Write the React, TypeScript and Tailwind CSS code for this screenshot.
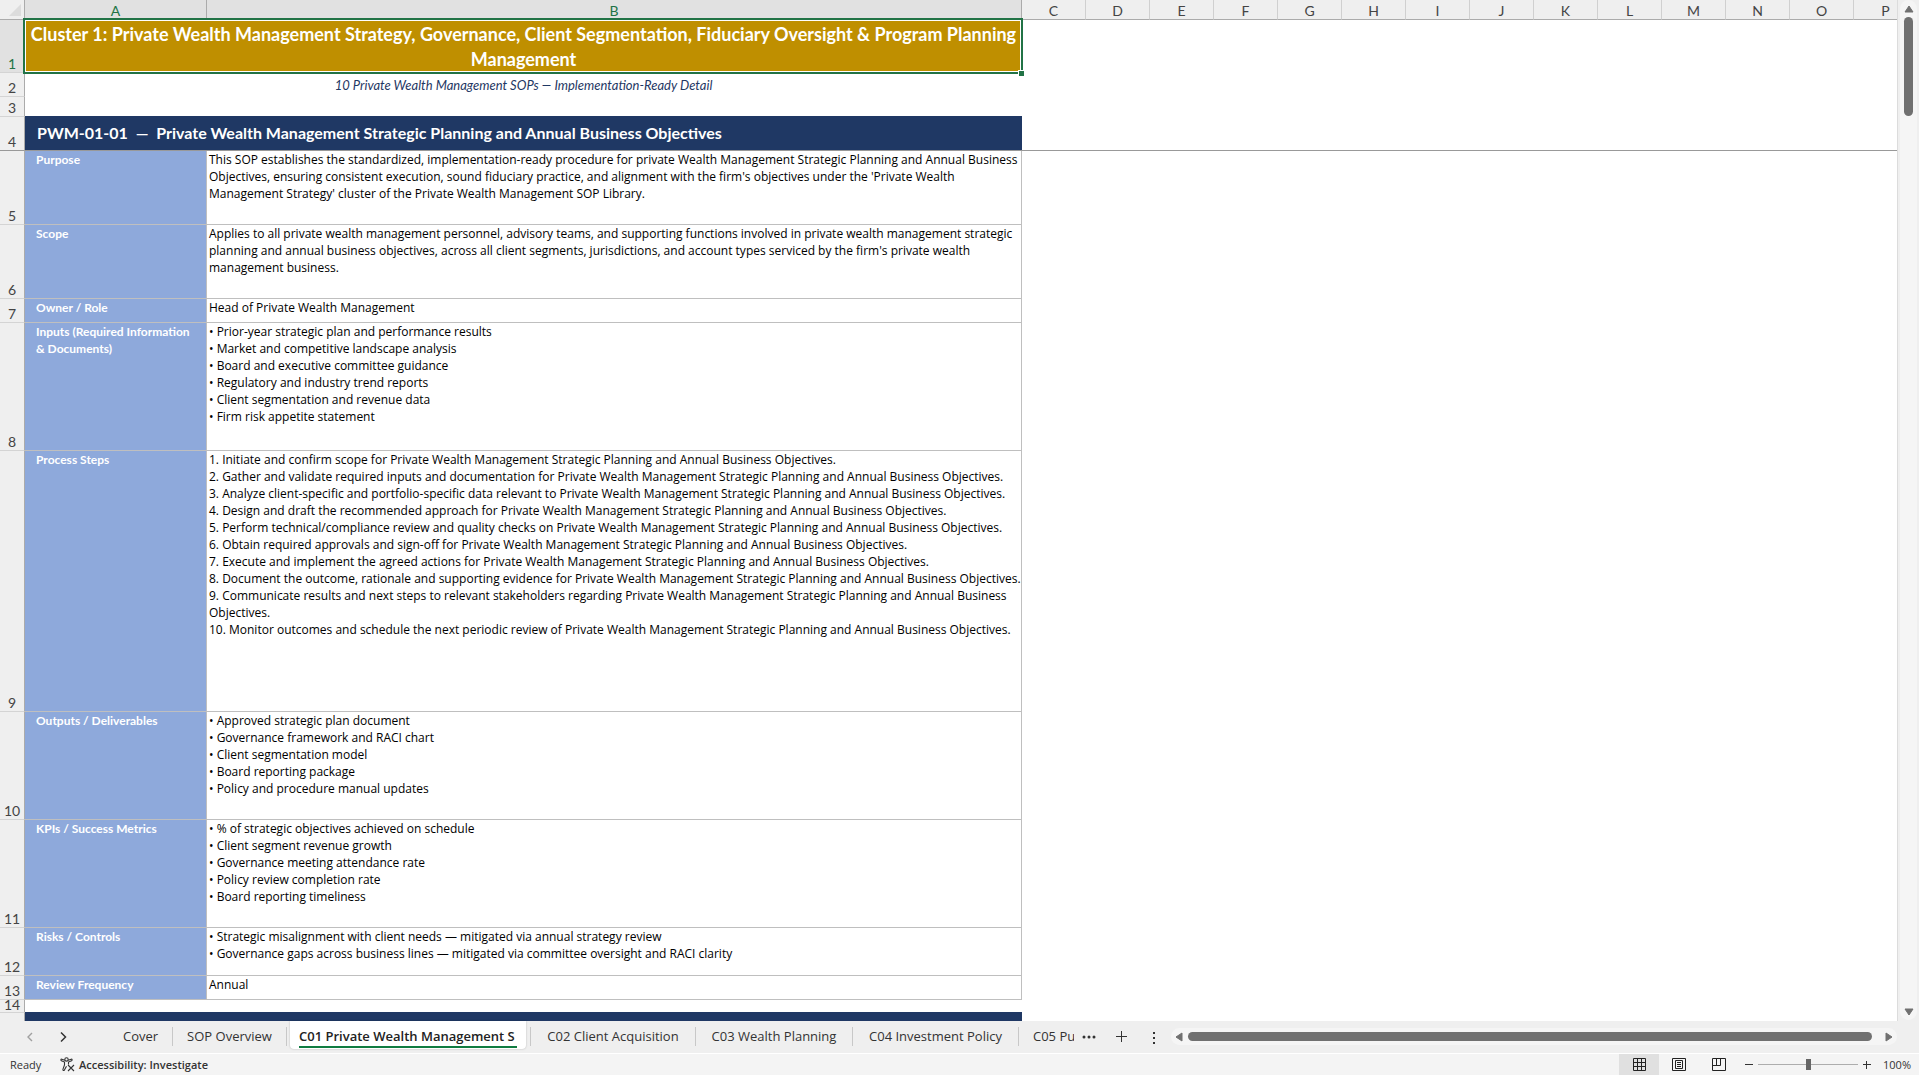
import { ReactNode } from 'react';
import clsx from 'clsx';

const OBJ = 'Private Wealth Management Strategic Planning and Annual Business';

const restColumns = ['C', 'D', 'E', 'F', 'G', 'H', 'I', 'J', 'K', 'L', 'M', 'N', 'O', 'P'];

type SopRow = { n: number; height: string; label: string[]; lines: string[] };

const sopRows: SopRow[] = [
  {
    n: 5,
    height: 'h-[74px]',
    label: ['Purpose'],
    lines: [
      'This SOP establishes the standardized, implementation-ready procedure for private Wealth Management Strategic Planning and Annual Business',
      "Objectives, ensuring consistent execution, sound fiduciary practice, and alignment with the firm's objectives under the 'Private Wealth",
      "Management Strategy' cluster of the Private Wealth Management SOP Library.",
    ],
  },
  {
    n: 6,
    height: 'h-[74px]',
    label: ['Scope'],
    lines: [
      'Applies to all private wealth management personnel, advisory teams, and supporting functions involved in private wealth management strategic',
      "planning and annual business objectives, across all client segments, jurisdictions, and account types serviced by the firm's private wealth",
      'management business.',
    ],
  },
  { n: 7, height: 'h-[24px]', label: ['Owner / Role'], lines: ['Head of Private Wealth Management'] },
  {
    n: 8,
    height: 'h-[128px]',
    label: ['Inputs (Required Information', '& Documents)'],
    lines: [
      '• Prior-year strategic plan and performance results',
      '• Market and competitive landscape analysis',
      '• Board and executive committee guidance',
      '• Regulatory and industry trend reports',
      '• Client segmentation and revenue data',
      '• Firm risk appetite statement',
    ],
  },
  {
    n: 9,
    height: 'h-[261px]',
    label: ['Process Steps'],
    lines: [
      `1. Initiate and confirm scope for ${OBJ} Objectives.`,
      `2. Gather and validate required inputs and documentation for ${OBJ} Objectives.`,
      `3. Analyze client-specific and portfolio-specific data relevant to ${OBJ} Objectives.`,
      `4. Design and draft the recommended approach for ${OBJ} Objectives.`,
      `5. Perform technical/compliance review and quality checks on ${OBJ} Objectives.`,
      `6. Obtain required approvals and sign-off for ${OBJ} Objectives.`,
      `7. Execute and implement the agreed actions for ${OBJ} Objectives.`,
      `8. Document the outcome, rationale and supporting evidence for ${OBJ} Objectives.`,
      `9. Communicate results and next steps to relevant stakeholders regarding ${OBJ}`,
      'Objectives.',
      `10. Monitor outcomes and schedule the next periodic review of ${OBJ} Objectives.`,
    ],
  },
  {
    n: 10,
    height: 'h-[108px]',
    label: ['Outputs / Deliverables'],
    lines: [
      '• Approved strategic plan document',
      '• Governance framework and RACI chart',
      '• Client segmentation model',
      '• Board reporting package',
      '• Policy and procedure manual updates',
    ],
  },
  {
    n: 11,
    height: 'h-[108px]',
    label: ['KPIs / Success Metrics'],
    lines: [
      '• % of strategic objectives achieved on schedule',
      '• Client segment revenue growth',
      '• Governance meeting attendance rate',
      '• Policy review completion rate',
      '• Board reporting timeliness',
    ],
  },
  {
    n: 12,
    height: 'h-[48px]',
    label: ['Risks / Controls'],
    lines: [
      '• Strategic misalignment with client needs — mitigated via annual strategy review',
      '• Governance gaps across business lines — mitigated via committee oversight and RACI clarity',
    ],
  },
  { n: 13, height: 'h-[24px]', label: ['Review Frequency'], lines: ['Annual'] },
];

function RowHead({ n, height, active, frozen }: { n?: number; height: string; active?: boolean; frozen?: boolean }) {
  return (
    <th
      scope="row"
      className={clsx(
        'border-r border-b border-r-[#ababab] p-0 text-center align-bottom text-[14px] leading-[17px] font-normal',
        height,
        active ? 'bg-[#e1e1e1] text-[#217346]' : 'bg-[#efefef] text-[#444444]',
        frozen ? 'border-b-[#999999]' : 'border-b-[#d4d4d4]',
      )}
    >
      {n}
    </th>
  );
}

function ColumnHead({ children, active }: { children: ReactNode; active?: boolean }) {
  return (
    <th
      scope="col"
      className={clsx(
        'h-[20px] border-r border-b border-b-[#ababab] p-0 text-center align-bottom text-[14px] leading-[17px] font-normal',
        active ? 'border-r-[#ababab] bg-[#e1e1e1] text-[#217346]' : 'border-r-[#d0d0d0] bg-[#efefef] text-[#444444]',
      )}
    >
      {children}
    </th>
  );
}

function Sheet() {
  return (
    <div className="min-w-0 flex-1 overflow-hidden border-r border-[#dcdcdc] bg-white">
      <table className="w-[1918px] table-fixed border-separate border-spacing-0 font-[Lato,'Liberation_Sans',sans-serif]">
        <colgroup>
          <col className="w-[25px]" />
          <col className="w-[182px]" />
          <col className="w-[815px]" />
          {restColumns.map((c) => (
            <col key={c} className="w-[64px]" />
          ))}
        </colgroup>
        <thead>
          <tr>
            <td className="h-[20px] border-r border-b border-[#ababab] bg-[#efefef] p-0 align-bottom">
              <svg viewBox="0 0 24 19" className="block h-[19px] w-[24px]">
                <path d="M21 4v12H9z" fill="#dcdcdc" />
              </svg>
            </td>
            <ColumnHead active>A</ColumnHead>
            <ColumnHead active>B</ColumnHead>
            {restColumns.map((c) => (
              <ColumnHead key={c}>{c}</ColumnHead>
            ))}
          </tr>
        </thead>
        <tbody>
          <tr>
            <RowHead n={1} height="h-[53px]" active />
            <td
              colSpan={2}
              className="relative bg-[#bf8f00] p-0 text-center text-[18px] leading-[25px] font-bold text-white"
            >
              Cluster 1: Private Wealth Management Strategy, Governance, Client Segmentation, Fiduciary Oversight &amp;
              Program Planning
              <br />
              Management
              {/* selection frame and fill handle */}
              <div className="absolute -top-[2px] -right-px -bottom-px -left-[2px] border-2 border-[#217346]">
                <div className="h-full border border-white" />
              </div>
              <div className="absolute -right-[2px] -bottom-[3px] size-[6px] border-t border-l border-white bg-[#217346]" />
            </td>
            <td colSpan={14} />
          </tr>
          <tr>
            <RowHead n={2} height="h-[24px]" />
            <td colSpan={2} className="p-0 text-center text-[13px] leading-[17px] text-[#1f3864] italic">
              10 Private Wealth Management SOPs — Implementation-Ready Detail
            </td>
            <td colSpan={14} />
          </tr>
          <tr>
            <RowHead n={3} height="h-[20px]" />
            <td colSpan={2} className="border-b border-[#1f3864] p-0" />
            <td colSpan={14} />
          </tr>
          <tr>
            <RowHead n={4} height="h-[34px]" frozen />
            <td
              colSpan={2}
              className="border-b border-[#999999] bg-[#1f3864] p-0 pb-[2px] pl-3 text-[16px] leading-[20px] font-bold whitespace-pre text-white"
            >
              {'PWM-01-01  —  Private Wealth Management Strategic Planning and Annual Business Objectives'}
            </td>
            <td colSpan={14} className="border-b border-[#999999]" />
          </tr>
          {sopRows.map((row) => (
            <tr key={row.n} className="align-top text-[12px] leading-[17px] whitespace-nowrap">
              <RowHead n={row.n} height={row.height} />
              <td className="border-r border-b border-[#bfbfbf] bg-[#8ea9db] p-0 pl-[11px] font-bold text-white">
                {row.label.map((line) => (
                  <div key={line}>{line}</div>
                ))}
              </td>
              <td className="border-r border-b border-[#bfbfbf] p-0 pl-[2px] font-['Open_Sans','Noto_Sans',sans-serif] text-black">
                {row.lines.map((line) => (
                  <div key={line}>{line}</div>
                ))}
              </td>
              <td colSpan={14} />
            </tr>
          ))}
          <tr>
            <th
              scope="row"
              className="h-[13px] border-r border-b border-r-[#ababab] border-b-[#d4d4d4] bg-[#efefef] p-0 text-[14px] leading-[10px] font-normal text-[#444444]"
            >
              <div className="h-[12px]">14</div>
            </th>
            <td colSpan={2} className="border-b border-[#1f3864] p-0" />
            <td colSpan={14} />
          </tr>
          <tr>
            <RowHead height="h-[34px]" />
            <td colSpan={2} className="bg-[#1f3864]" />
            <td colSpan={14} />
          </tr>
        </tbody>
      </table>
    </div>
  );
}

function VerticalScroll() {
  return (
    <div className="mx-[2px] mb-px flex w-[17px] flex-col items-center rounded-full bg-[#f5f5f5]">
      <button aria-label="Scroll up" className="flex h-[17px] items-center">
        <svg viewBox="0 0 10 8" className="h-2 w-[10px]" fill="#707070">
          <path d="M5 1 9 7H1z" stroke="#707070" strokeLinejoin="round" />
        </svg>
      </button>
      <div className="h-[99px] w-[9px] rounded-full bg-[#707070]" />
      <button aria-label="Scroll down" className="mt-auto flex h-[17px] items-center">
        <svg viewBox="0 0 10 8" className="h-2 w-[10px]" fill="#707070">
          <path d="M5 7 9 1H1z" stroke="#707070" strokeLinejoin="round" />
        </svg>
      </button>
    </div>
  );
}

function Tab({ children, width }: { children: ReactNode; width: string }) {
  return (
    <button className={clsx('my-[6px] h-[19px] border-r border-[#c8c8c8] text-center whitespace-nowrap', width)}>
      {children}
    </button>
  );
}

function TabBar() {
  return (
    <div className="flex h-[32px] items-start bg-[#efefef] font-['Open_Sans','Noto_Sans',sans-serif] text-[13px] leading-[19px] text-[#333333]">
      <div className="flex h-[32px] w-[109px] shrink-0 items-center gap-[17px] pl-[22px]">
        <button aria-label="Previous sheets" className="w-4 text-[#a0a0a0]">
          <svg viewBox="0 0 16 16" className="size-4" fill="none" stroke="currentColor" strokeWidth="1.4">
            <path d="m10 4-4 4 4 4" />
          </svg>
        </button>
        <button aria-label="Next sheets" className="w-4 text-[#333333]">
          <svg viewBox="0 0 16 16" className="size-4" fill="none" stroke="currentColor" strokeWidth="1.5">
            <path d="m6 3.500 4.500 4.500L6 12.500" />
          </svg>
        </button>
      </div>
      <Tab width="w-[64px]">Cover</Tab>
      <Tab width="w-[114px]">SOP Overview</Tab>
      <button className="ml-[3px] h-[28px] w-[236px] shrink-0 rounded-b-[4px] bg-white px-[9px] pt-[4px] text-left font-semibold whitespace-nowrap text-[#222222] shadow-[0_0_2px_rgba(0,0,0,0.25)]">
        <span className="block border-b-2 border-[#107c41]">C01 Private Wealth Management S</span>
      </button>
      <div className="my-[6px] h-[19px] w-[5px] shrink-0 border-r border-[#c8c8c8]" />
      <Tab width="w-[165px]">C02 Client Acquisition</Tab>
      <Tab width="w-[157px]">C03 Wealth Planning</Tab>
      <Tab width="w-[166px]">C04 Investment Policy</Tab>
      <button className="my-[6px] ml-[14px] w-[41px] shrink-0 overflow-hidden text-left whitespace-nowrap">
        C05 Pu
      </button>
      <button aria-label="More sheets" className="ml-[6px] flex h-[32px] w-[18px] items-center justify-center">
        <svg viewBox="0 0 14 4" className="h-1 w-[14px]" fill="#333333">
          <circle cx="2" cy="2" r="1.5" />
          <circle cx="7" cy="2" r="1.5" />
          <circle cx="12" cy="2" r="1.5" />
        </svg>
      </button>
      <button aria-label="New sheet" className="ml-[14px] flex h-[32px] w-[20px] items-center justify-center">
        <svg viewBox="0 0 12 12" className="size-3" stroke="#333333">
          <path d="M0 5.500h11M5.500 0v11" />
        </svg>
      </button>
      <div className="ml-[18px] flex h-[34px] w-[8px] flex-col items-center justify-center gap-[3px]">
        <span className="size-[2px] bg-[#333333]" />
        <span className="size-[2px] bg-[#333333]" />
        <span className="size-[2px] bg-[#333333]" />
      </div>
      <div className="mt-[7px] mr-[22px] ml-[13px] flex h-[17px] flex-1 items-center rounded-full bg-[#f5f5f5]">
        <button aria-label="Scroll left" className="ml-[4px]">
          <svg viewBox="0 0 8 10" className="h-[10px] w-2" fill="#707070">
            <path d="M1 5 7 1v8z" stroke="#707070" strokeLinejoin="round" />
          </svg>
        </button>
        <div className="mr-[13px] ml-[5px] h-[9px] flex-1 rounded-full bg-[#707070]" />
        <button aria-label="Scroll right" className="mr-[4px]">
          <svg viewBox="0 0 8 10" className="h-[10px] w-2" fill="#707070">
            <path d="M7 5 1 1v8z" stroke="#707070" strokeLinejoin="round" />
          </svg>
        </button>
      </div>
    </div>
  );
}

function StatusBar() {
  return (
    <div className="flex h-[22px] items-center border-t border-white bg-[#f4f4f4] font-['Open_Sans','Noto_Sans',sans-serif] text-[11px] leading-[20px] text-[#333333]">
      <span className="w-[50px] pl-[10px]">Ready</span>
      <button className="ml-[10px] flex items-center gap-[4px] font-semibold whitespace-nowrap">
        <svg viewBox="0 0 15 15" className="size-[15px]" fill="none" stroke="#333333" strokeWidth="1.1">
          <circle cx="6.5" cy="2.4" r="1.7" />
          <path d="M4.900 3.300 1.800 2.200C.8 2 .5 3.300 1.400 3.700L4.500 5v3L2.900 12.400c-.3 1.100 1 1.600 1.500.6L6.500 9.200M8.100 3.300l3.100-1.100c1-.2 1.300 1.100.4 1.500L8.500 5v2.500" />
          <path d="m8 8 6 6M14 8l-6 6" />
        </svg>
        Accessibility: Investigate
      </button>
      <div className="ml-auto flex h-full items-center">
        <button aria-label="Normal" className="flex h-full w-[40px] items-center justify-center bg-[#e0e0e0]">
          <svg viewBox="0 0 13 13" className="size-[13px]" fill="none" stroke="#222222">
            <path d="M.5.5h12v12H.5zM4.500.5v12M8.500.5v12M.5 4.500h12M.5 8.500h12" />
          </svg>
        </button>
        <button aria-label="Page Layout" className="flex h-full w-[40px] items-center justify-center">
          <svg viewBox="0 0 14 13" className="h-[13px] w-[14px]" fill="none" stroke="#222222">
            <path d="M.5.5h13v12H.5zM3.500 2.500h7v8h-7zM5 4.500h4M5 6.500h4M5 8.500h4" />
          </svg>
        </button>
        <button aria-label="Page Break Preview" className="flex h-full w-[40px] items-center justify-center">
          <svg viewBox="0 0 14 13" className="h-[13px] w-[14px]" fill="none" stroke="#222222">
            <path d="M.5.5h13v12H.5zM4.500.5v7M8.500.5v7M.5 7.500h8" />
          </svg>
        </button>
        <button aria-label="Zoom out" className="ml-[6px]">
          <svg viewBox="0 0 8 8" className="size-2" stroke="#333333">
            <path d="M0 3.500h8" />
          </svg>
        </button>
        <input
          type="range"
          aria-label="Zoom"
          min={10}
          max={190}
          defaultValue={101}
          className="mx-[5px] h-[11px] w-[100px] appearance-none bg-linear-to-b from-transparent from-45% via-[#666666] via-45% to-transparent to-55% [&::-webkit-slider-thumb]:h-[11px] [&::-webkit-slider-thumb]:w-[5px] [&::-webkit-slider-thumb]:appearance-none [&::-webkit-slider-thumb]:bg-[#666666]"
        />
        <button aria-label="Zoom in">
          <svg viewBox="0 0 8 8" className="size-2" stroke="#333333">
            <path d="M0 3.500h8M3.500 0v8" />
          </svg>
        </button>
        <button className="w-[48px] pr-[8px] text-right">100%</button>
      </div>
    </div>
  );
}

export default function App() {
  return (
    <div className="flex h-screen flex-col overflow-hidden bg-[#efefef]">
      <div className="flex min-h-0 flex-1">
        <Sheet />
        <VerticalScroll />
      </div>
      <TabBar />
      <StatusBar />
    </div>
  );
}
